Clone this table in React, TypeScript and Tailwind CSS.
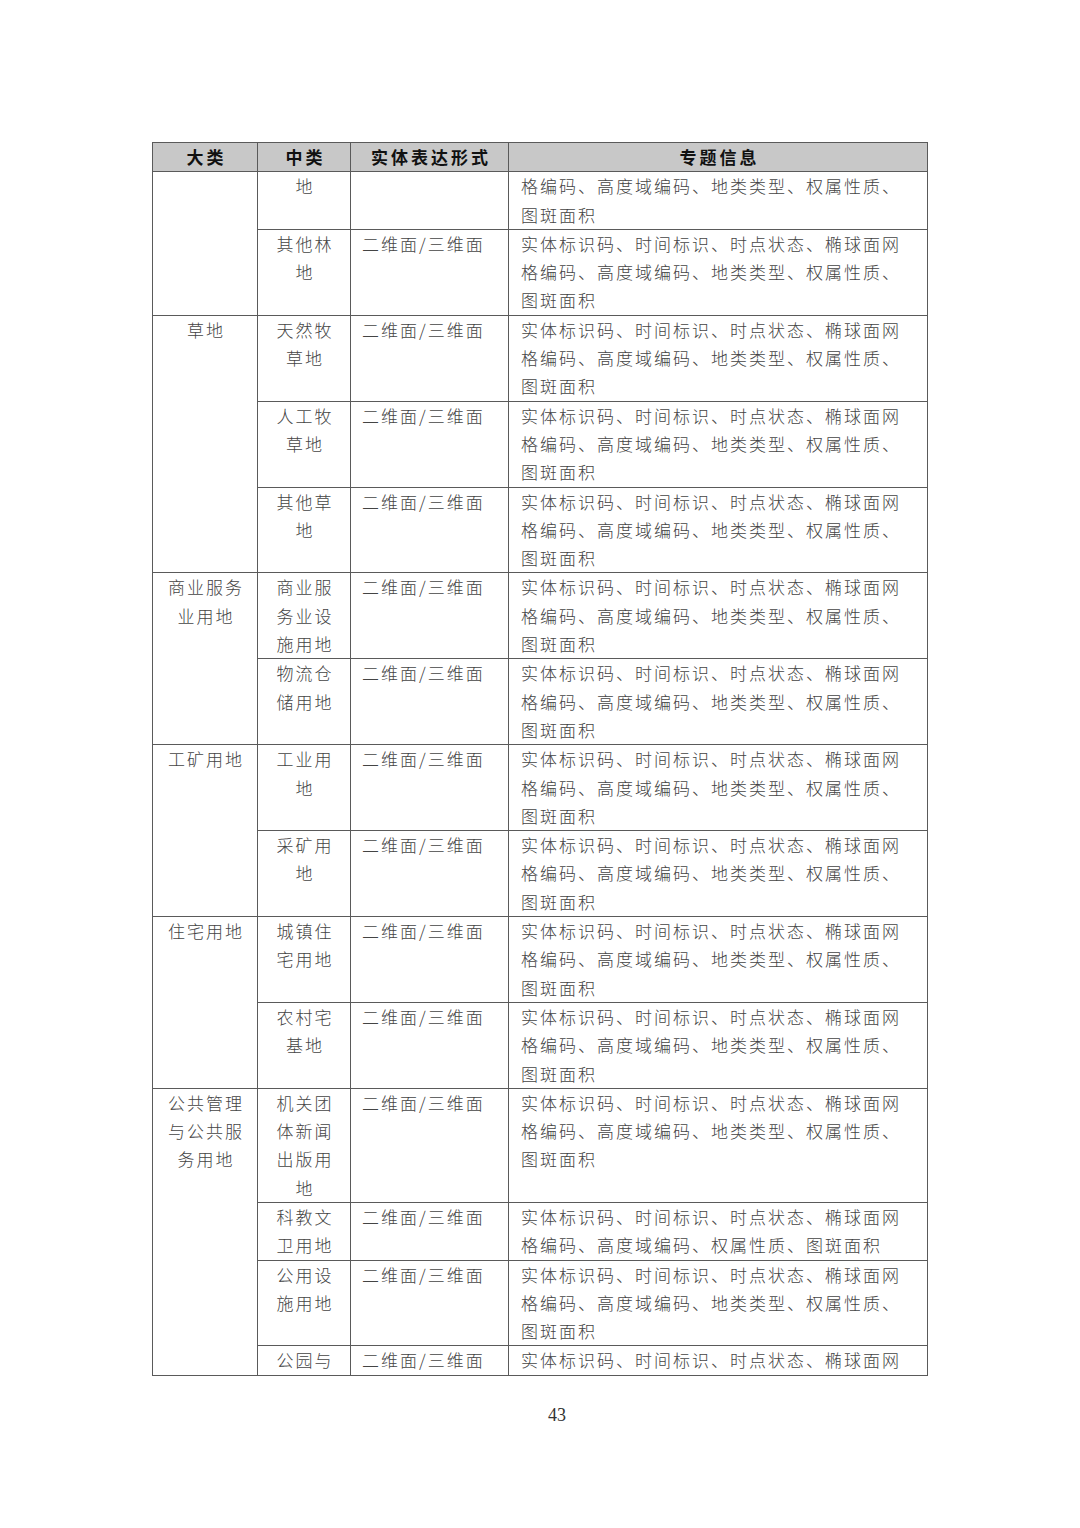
import React from "react"

type Row = {
  big?: { lines: string[]; span: number }
  mid: string[]
  form: string
  info: string[]
}

const L1 = "实体标识码、时间标识、时点状态、椭球面网"
const L2 = "格编码、高度域编码、地类类型、权属性质、"
const L3 = "图斑面积"
const FULL = [L1, L2, L3]
const FORM = "二维面/三维面"

const rows: Row[] = [
  { big: { lines: [], span: 2 }, mid: ["地"], form: "", info: [L2, L3] },
  { mid: ["其他林", "地"], form: FORM, info: FULL },
  { big: { lines: ["草地"], span: 3 }, mid: ["天然牧", "草地"], form: FORM, info: FULL },
  { mid: ["人工牧", "草地"], form: FORM, info: FULL },
  { mid: ["其他草", "地"], form: FORM, info: FULL },
  { big: { lines: ["商业服务", "业用地"], span: 2 }, mid: ["商业服", "务业设", "施用地"], form: FORM, info: FULL },
  { mid: ["物流仓", "储用地"], form: FORM, info: FULL },
  { big: { lines: ["工矿用地"], span: 2 }, mid: ["工业用", "地"], form: FORM, info: FULL },
  { mid: ["采矿用", "地"], form: FORM, info: FULL },
  { big: { lines: ["住宅用地"], span: 2 }, mid: ["城镇住", "宅用地"], form: FORM, info: FULL },
  { mid: ["农村宅", "基地"], form: FORM, info: FULL },
  { big: { lines: ["公共管理", "与公共服", "务用地"], span: 4 }, mid: ["机关团", "体新闻", "出版用", "地"], form: FORM, info: FULL },
  { mid: ["科教文", "卫用地"], form: FORM, info: [L1, "格编码、高度域编码、权属性质、图斑面积"] },
  { mid: ["公用设", "施用地"], form: FORM, info: FULL },
  { mid: ["公园与"], form: FORM, info: [L1] },
]

const cell = "border border-[#5a5a5a] align-top p-0"
const font = { fontFamily: '"Noto Sans CJK SC", "Noto Sans", sans-serif' }

function Lines({ lines }: { lines: string[] }) {
  return (
    <>
      {lines.map((l, i) => (
        <div key={i} className="whitespace-nowrap h-[28.3px]">
          {l}
        </div>
      ))}
    </>
  )
}

export default function App() {
  return (
    <div className="w-[1080px] h-[1528px] bg-white pt-[142px]">
      <table
        className="mx-auto w-[775px] table-fixed border-collapse border border-[#5a5a5a] text-[17px] leading-[28.3px] tracking-[2px] text-[#444] font-light"
        style={font}
      >
        <colgroup>
          <col className="w-[105px]" />
          <col className="w-[93px]" />
          <col className="w-[158px]" />
          <col className="w-[419px]" />
        </colgroup>
        <thead>
          <tr className="bg-[#c8c8c8] text-[#111] font-bold tracking-[3px] h-[29px]">
            <th className={`${cell} text-center pl-[3px] align-middle`}>大类</th>
            <th className={`${cell} text-center pl-[3px] align-middle`}>中类</th>
            <th className={`${cell} text-center pl-[3px] align-middle`}>实体表达形式</th>
            <th className={`${cell} text-center pl-[3px] align-middle`}>专题信息</th>
          </tr>
        </thead>
        <tbody>
          {rows.map((r, i) => (
            <tr key={i}>
              {r.big && (
                <td rowSpan={r.big.span} className={`${cell} text-center pl-[2px]`}>
                  <Lines lines={r.big.lines} />
                </td>
              )}
              <td className={`${cell} text-center pl-[2px]`}>
                <Lines lines={r.mid} />
              </td>
              <td className={`${cell} pl-[11px]`}>
                <div className="h-[28.3px]">{r.form}</div>
              </td>
              <td className={`${cell} pl-[12px]`}>
                <Lines lines={r.info} />
              </td>
            </tr>
          ))}
        </tbody>
      </table>
      <div
        className="mt-[26px] pl-[34px] text-center text-[18px] text-[#333]"
        style={{ fontFamily: '"Liberation Serif", serif' }}
      >
        43
      </div>
    </div>
  )
}
